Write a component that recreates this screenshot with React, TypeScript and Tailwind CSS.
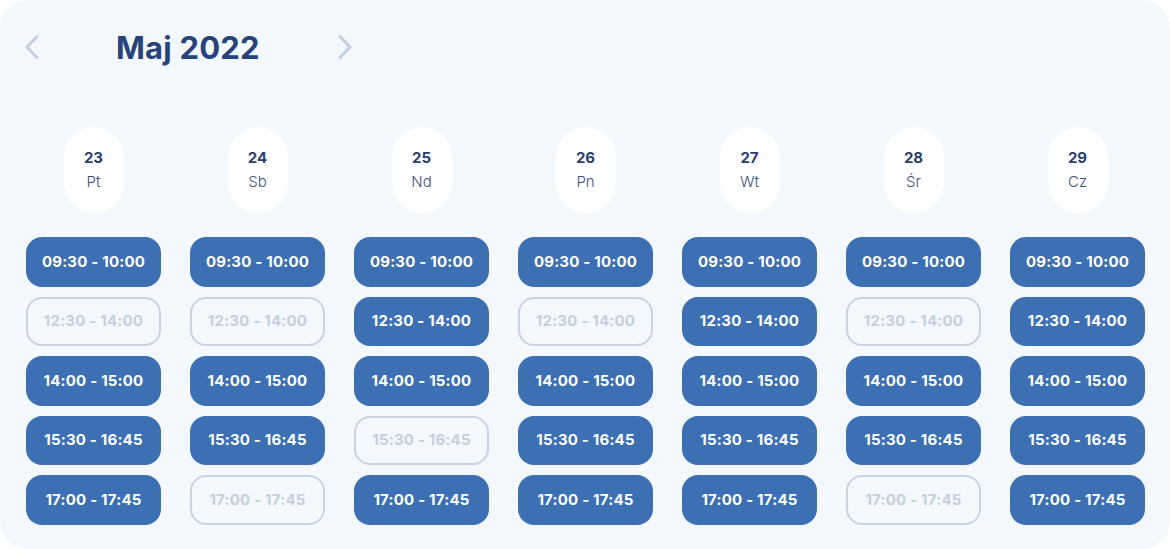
const slots = ["09:30 - 10:00", "12:30 - 14:00", "14:00 - 15:00", "15:30 - 16:45", "17:00 - 17:45"]

const days = [
  { n: 23, d: "Pt", open: [1, 0, 1, 1, 1] },
  { n: 24, d: "Sb", open: [1, 0, 1, 1, 0] },
  { n: 25, d: "Nd", open: [1, 1, 1, 0, 1] },
  { n: 26, d: "Pn", open: [1, 0, 1, 1, 1] },
  { n: 27, d: "Wt", open: [1, 1, 1, 1, 1] },
  { n: 28, d: "Śr", open: [1, 0, 1, 1, 0] },
  { n: 29, d: "Cz", open: [1, 1, 1, 1, 1] },
]

function Chevron({ dir }: { dir: "left" | "right" }) {
  return (
    <svg width="16" height="26" viewBox="0 0 16 26" fill="none">
      <path
        d={dir === "left" ? "M13 2.5 L3 13 L13 23.5" : "M3 2.5 L13 13 L3 23.5"}
        stroke="#c3cfe0"
        strokeWidth="3"
        strokeLinecap="round"
        strokeLinejoin="round"
      />
    </svg>
  )
}

export default function App() {
  return (
    <div className="w-[1170px] h-[549px] bg-white font-['Inter','Liberation_Sans',sans-serif]">
      <div className="h-full w-full rounded-[28px] bg-[#f3f8fd] pl-[26px] pr-[25px] pt-[34px]">
        <div className="flex items-center h-[26px]">
          <button className="ml-[-2px] w-[16px]">
            <Chevron dir="left" />
          </button>
          <h1 className="ml-[76px] w-[221px] text-[31px] font-bold leading-none tracking-[0.2px] text-[#27437a]">
            Maj 2022
          </h1>
          <button className="w-[16px]">
            <Chevron dir="right" />
          </button>
        </div>

        <div className="mt-[67px] grid grid-cols-7 gap-x-[29px]">
          {days.map((day) => (
            <div key={day.n} className="flex flex-col items-center">
              <div className="flex h-[86px] w-[60px] flex-col items-center justify-center rounded-full bg-white">
                <span className="text-[15px] font-bold leading-[20px] text-[#2b3f6b]">{day.n}</span>
                <span className="mt-[4px] text-[15px] font-light leading-[20px] text-[#3c5180]">{day.d}</span>
              </div>
              <div className="mt-[24px] flex w-full flex-col gap-[10px]">
                {slots.map((s, i) =>
                  day.open[i] ? (
                    <button
                      key={s}
                      className="h-[49.5px] w-full rounded-[16px] bg-[#3d70b2] text-[15px] font-bold tracking-[0.2px] text-white"
                    >
                      {s}
                    </button>
                  ) : (
                    <button
                      key={s}
                      className="h-[49.5px] w-full rounded-[16px] border-2 border-[#c8d3e2] text-[15px] font-bold tracking-[0.2px] text-[#c5d0de]"
                    >
                      {s}
                    </button>
                  )
                )}
              </div>
            </div>
          ))}
        </div>
      </div>
    </div>
  )
}
